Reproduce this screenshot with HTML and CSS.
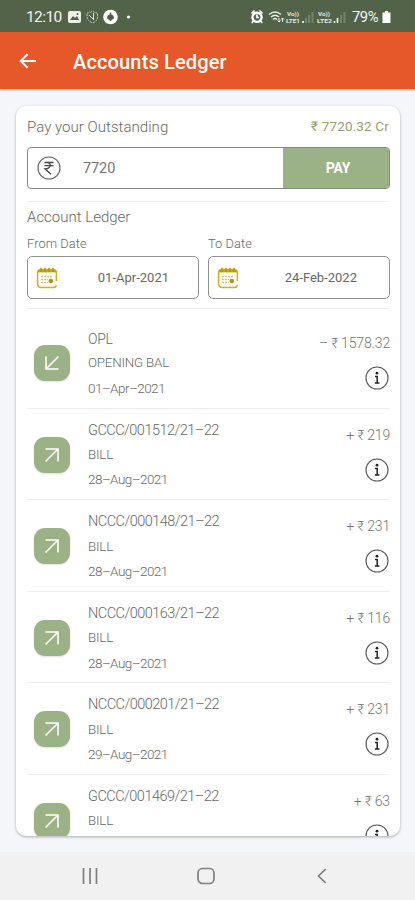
FILE: index.html
```html
<!DOCTYPE html>
<html lang="en">
<head>
<meta charset="utf-8">
<meta name="viewport" content="width=device-width, initial-scale=1">
<title>Accounts Ledger</title>
<link rel="stylesheet" href="styles.css">
</head>
<body>
<svg width="0" height="0" class="defs">
  <symbol id="out" viewBox="0 0 36 36"><path d="M11.500 24.500 24 12M11.500 12H24v12.500" fill="none" stroke="#fff" stroke-width="1.600"/></symbol>
  <symbol id="in" viewBox="0 0 36 36"><path d="M24.500 11.500 12 24M12 11.500V24h12.500" fill="none" stroke="#fff" stroke-width="1.600"/></symbol>
  <symbol id="info" viewBox="0 0 24 24"><circle cx="12" cy="12" r="11" fill="none" stroke="#555" stroke-width="1.100"/><circle cx="12" cy="7.200" r="1.400" fill="#222"/><path d="M10 10.500h2.200v6.200M9.800 17h4.600" fill="none" stroke="#222" stroke-width="1.500"/></symbol>
  <symbol id="cal" viewBox="0 0 22 22"><path d="M20.400 14V5.500a3 3 0 0 0-3-3H4.600a3 3 0 0 0-3 3V17a3.500 3.500 0 0 0 3.500 3.500H17a3.500 3.500 0 0 0 3.500-2.300" fill="#fffdf2" stroke="#d0ad2b" stroke-width="1.500"/><path d="M2 4.200h18" stroke="#c5a21c" stroke-width="2.400"/><path d="M5 .8v4M9 .8v4M13 .8v4M17 .8v4" stroke="#b99408" stroke-width="1.500"/><path d="M5 9.500h12M5 12.500h7M5 15.500h7" stroke="#d8c584" stroke-width="1.300" stroke-dasharray="2 1"/><circle cx="14.800" cy="14" r="2.300" fill="#b49418"/></symbol>
</svg>
<div class="status">
  <span class="time">12:10</span>
  <svg class="s-left" width="66" height="16" viewBox="0 0 66 16">
    <rect x="1" y="2" width="13" height="12" rx="2" fill="#edf1e8"/><path d="m3 11 3-4 2 2 2-2 2 4z" fill="#52634a"/><circle cx="10.500" cy="5" r="1" fill="#52634a"/>
    <path d="M20 4q3 0 5.500-2Q28 4 30.500 4v4q0 4-5 6-5-2-5.500-6z" fill="none" stroke="#c5cebe" stroke-dasharray="2 1"/><path d="m22 6 5 5M26.500 4v6" stroke="#dce2d8"/>
    <circle cx="43.500" cy="8" r="7.300" fill="#fff"/><path d="M43.500 3.500v3M43.500 10v2" stroke="#4d5f45" stroke-width="1.500"/><path d="M40 9.500q0-4 3.500-4t3.500 4l-3.500 2z" fill="#4d5f45"/>
    <circle cx="61.500" cy="8" r="1.600" fill="#fff"/>
  </svg>
  <svg class="s-right" width="98" height="16" viewBox="0 0 98 16">
    <circle cx="7" cy="8.300" r="4.600" fill="#52634a" stroke="#fff" stroke-width="2.400"/><path d="m1.500 4.500 3-3M12.500 4.500l-3-3M7 5.500v3h2M3 12l-1 2M11 12l1 2" stroke="#fff" stroke-width="1.700" fill="none"/>
    <path d="M19 5.500q6-5 12 0M21 8q4-3.500 8 0M23 10.500q2-2 4 0" fill="none" stroke="#e6ece2" stroke-width="1.500"/><path d="M29 13V9m-1.500 2.500L29 13l1.500-1.500M32.500 9v4M31 10.500 32.500 9 34 10.500" fill="none" stroke="#fff" stroke-width=".9"/>
    <g fill="#e4eae0" class="lte"><text x="37" y="6.500" textLength="12" lengthAdjust="spacingAndGlyphs">Vo))</text><text x="36" y="14" textLength="14" lengthAdjust="spacingAndGlyphs">LTE1</text><text x="68" y="6.500" textLength="12" lengthAdjust="spacingAndGlyphs">Vo))</text><text x="67" y="14" textLength="15" lengthAdjust="spacingAndGlyphs">LTE2</text></g>
    <path d="M53 14v-2M84.500 14v-2M87.500 14V9" stroke="#fff" stroke-width="1.600"/><path d="M56 14V9M59 14V6M62.500 14V3M91 14V6M94.500 14V3" stroke="#75836d" stroke-width="2"/>
  </svg>
  <span class="pct">79%</span>
  <svg width="9" height="14" viewBox="0 0 9 14"><path d="M3 1h3v1.500h2.500V13H.5V2.500H3z" fill="#fff"/></svg>
</div>
<header class="bar">
  <svg width="18" height="16" viewBox="0 0 18 16"><path d="M17 8H2M8.500 1.200 1.700 8l6.800 6.800" fill="none" stroke="#fff" stroke-width="2"/></svg>
  <h1>Accounts Ledger</h1>
</header>
<main>
  <section class="card">
    <div class="pay-head"><h2 class="l-pay">Pay your Outstanding</h2><span class="due">₹ 7720.32 Cr</span></div>
    <div class="pay-box">
      <svg width="24" height="24" viewBox="0 0 24 24"><circle cx="12" cy="12" r="11" fill="none" stroke="#606060" stroke-width="1.100"/><path d="M7.500 6.500h9M7.500 9.700h9M8 6.500c7-1 7 6.300 0 6.300l6 5.500" fill="none" stroke="#444" stroke-width="1.300"/></svg>
      <span class="amount">7720</span><button>PAY</button>
    </div>
    <div class="ledger">
      <h2 class="l-ledger">Account Ledger</h2>
      <div class="dates">
        <div class="field"><label>From Date</label><div class="date"><svg width="22" height="22"><use href="#cal"/></svg><span>01-Apr-2021</span></div></div>
        <div class="field"><label>To Date</label><div class="date"><svg width="22" height="22"><use href="#cal"/></svg><span>24-Feb-2022</span></div></div>
      </div>
    </div>
    <div class="rows">
      <article class="row"><div class="tile"><svg width="36" height="36"><use href="#in"/></svg></div><div class="txt"><p class="ref opl">OPL</p><p class="kind">OPENING BAL</p><p class="day">01–Apr–2021</p></div><div class="side"><span>– ₹ 1578.32</span><svg width="24" height="24"><use href="#info"/></svg></div></article>
      <article class="row"><div class="tile"><svg width="36" height="36"><use href="#out"/></svg></div><div class="txt"><p class="ref">GCCC/001512/21–22</p><p class="kind">BILL</p><p class="day">28–Aug–2021</p></div><div class="side"><span>+ ₹ 219</span><svg width="24" height="24"><use href="#info"/></svg></div></article>
      <article class="row"><div class="tile"><svg width="36" height="36"><use href="#out"/></svg></div><div class="txt"><p class="ref">NCCC/000148/21–22</p><p class="kind">BILL</p><p class="day">28–Aug–2021</p></div><div class="side"><span>+ ₹ 231</span><svg width="24" height="24"><use href="#info"/></svg></div></article>
      <article class="row"><div class="tile"><svg width="36" height="36"><use href="#out"/></svg></div><div class="txt"><p class="ref">NCCC/000163/21–22</p><p class="kind">BILL</p><p class="day">28–Aug–2021</p></div><div class="side"><span>+ ₹ 116</span><svg width="24" height="24"><use href="#info"/></svg></div></article>
      <article class="row"><div class="tile"><svg width="36" height="36"><use href="#out"/></svg></div><div class="txt"><p class="ref">NCCC/000201/21–22</p><p class="kind">BILL</p><p class="day">29–Aug–2021</p></div><div class="side"><span>+ ₹ 231</span><svg width="24" height="24"><use href="#info"/></svg></div></article>
      <article class="row"><div class="tile"><svg width="36" height="36"><use href="#out"/></svg></div><div class="txt"><p class="ref">GCCC/001469/21–22</p><p class="kind">BILL</p></div><div class="side"><span>+ ₹ 63</span><svg width="24" height="24"><use href="#info"/></svg></div></article>
    </div>
  </section>
</main>
<nav>
  <svg width="16" height="16" viewBox="0 0 16 16"><path d="M1.500 0v16M8 0v16M14.500 0v16" stroke="#7f7f7f" stroke-width="1.700"/></svg>
  <svg class="home" width="18" height="18" viewBox="0 0 18 18"><rect x="1" y="1.500" width="16" height="15" rx="4.500" fill="none" stroke="#7f7f7f" stroke-width="1.700"/></svg>
  <svg class="back" width="10" height="16" viewBox="0 0 10 16"><path d="M8.800 1 1.500 8l7.300 7" fill="none" stroke="#7f7f7f" stroke-width="1.700"/></svg>
</nav>
</body>
</html>
```
FILE: styles.css
```css
* { box-sizing: border-box; margin: 0; padding: 0; }
body { width: 415px; height: 900px; overflow: hidden; background: #f4f6f9; font-family: Roboto, "Noto Sans", sans-serif; color: #747474; display: flex; flex-direction: column; }
svg { display: block; flex: none; }
.defs { position: absolute; }
.lte { font: 700 6px Roboto, sans-serif; }
.status { height: 32px; flex: none; background: #52634a; color: #f2f5ef; display: flex; align-items: center; padding: 2px 24px 0 26px; font-size: 15.5px; }
.time { width: 37px; margin-right: 4px; letter-spacing: -.6px; }
.s-right { margin-left: auto; }
.pct { width: 27px; margin: 0 3px 0 4px; font-size: 14.8px; letter-spacing: -.5px; }
.bar { height: 56.500px; flex: none; background: #e65829; box-shadow: 0 1px 2px #e6582966; display: flex; align-items: center; padding: 2px 19px 0; gap: 36px; }
h1 { color: #fff; font-size: 20px; font-weight: 500; letter-spacing: .15px; padding-top: 1px; }
main { flex: 1; padding: 17.500px 15px 0 16px; }
.card { height: 730px; background: #fff; border-radius: 10px; overflow: hidden; padding: 0 10px 0 11px; box-shadow: 0 1px 3px #0000004d; }
h2 { font-size: 15px; font-weight: 300; color: #686868; }
.pay-head { height: 41px; display: flex; align-items: center; justify-content: space-between; }
.l-pay { letter-spacing: .04px; }
.due { color: #9a9e6c; font-size: 13.5px; letter-spacing: .15px; padding: 0 1px 2px 0; }
.pay-box { height: 42px; border: 1px solid #858585; border-radius: 4px; display: flex; align-items: center; padding-left: 9px; overflow: hidden; }
.amount { flex: 1; margin-left: 22px; font-size: 14.5px; letter-spacing: -.1px; }
button { width: 106px; height: 42px; padding-left: 4px; border: 0; background: #9bb287; color: #fff; font: 700 14px Roboto, sans-serif; letter-spacing: -.2px; }
.ledger { margin-top: 12px; height: 108px; border: solid #efefef; border-width: 1px 0; }
.l-ledger { height: 31px; line-height: 31px; letter-spacing: 0; }
.dates { display: grid; grid-template-columns: 172px 182px; gap: 9px; }
label { display: block; height: 23px; line-height: 21.500px; font-size: 12.8px; font-weight: 300; letter-spacing: .1px; color: #686868; }
.date { height: 43px; border: 1px solid #929292; border-radius: 5px; display: flex; align-items: center; padding: 0 29px 0 8px; justify-content: space-between; font-size: 13px; letter-spacing: 0; color: #686868; }
.field + .field .date { padding-right: 32px; }
.rows { padding-top: 8px; }
.row { height: 91.6px; display: flex; padding: 10px 0 0 7px; border-bottom: 1px solid #efefef; font-weight: 300; }
.tile { width: 36px; height: 36px; margin: 18px 18px 0 0; border-radius: 11px; background: #9bb287; box-shadow: 0 1px 2px #0000001f; flex: none; }
.txt { flex: 1; }
.txt p { height: 24.4px; line-height: 24.4px; white-space: nowrap; color: #686868; }
.ref { font-size: 14.5px; letter-spacing: -.52px; }
.txt .opl, .kind { font-size: 13.3px; letter-spacing: -.18px; }
.txt .opl { font-size: 14px; letter-spacing: -.3px; }
.day { font-size: 13.5px; letter-spacing: -.55px; }
.side { display: flex; flex-direction: column; align-items: flex-end; padding-top: 4px; }
.side span { height: 24px; line-height: 24px; font-size: 14px; letter-spacing: -.15px; white-space: nowrap; }
.side svg { margin: 11px 1px 0 0; }
nav { height: 48px; flex: none; background: #f1f1f1; display: flex; align-items: center; padding-left: 82px; }
.home { margin-left: 99px; }
.back { margin-left: 102px; }
```
